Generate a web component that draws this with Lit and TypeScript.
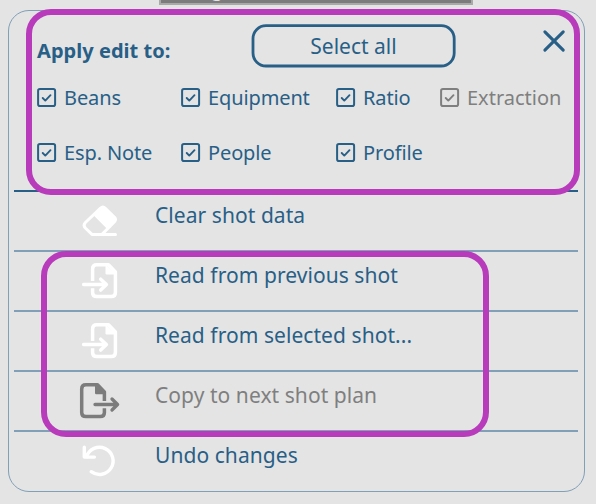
import { LitElement, html, css, svg } from "lit";
import { customElement } from "lit/decorators.js";

const eraser = svg`
  <path d="M7.4 22.5 L22.3 8.3 Q25 6 27.3 8.3 L36.5 17.3 Q38.5 19.5 36.5 21.8 L24 34.4 H14 L7.3 28 Q4.8 25.3 7.4 22.5Z" fill="none" stroke="currentColor" stroke-width="3" stroke-linejoin="round"/>
  <path d="M16 15.7 L22.3 8.3 Q25 6 27.3 8.3 L36.5 17.3 Q38.5 19.5 36.5 21.8 L29 28.7Z" fill="currentColor"/>
  <path d="M15 34.5 H37.5" fill="none" stroke="currentColor" stroke-width="3" stroke-linecap="round"/>`;

const fileIn = svg`
  <path d="M14.6 21 V9 Q14.6 4.8 18.8 4.8 H30.5 L37.4 12 V32.4 Q37.4 36.6 33.2 36.6 H18.8 Q14.6 36.6 14.6 32.4 V28.2" fill="none" stroke="currentColor" stroke-width="3.5" stroke-linejoin="round"/>
  <path d="M27.5 4.5 V13.2 Q27.5 14.4 28.7 14.4 H38.5Z" fill="currentColor"/>
  <path d="M5.6 24.5 H28 M22.7 19.2 L28.4 24.5 L22.7 30.1" fill="none" stroke="currentColor" stroke-width="3.5" stroke-linecap="round" stroke-linejoin="round"/>`;

const fileOut = svg`
  <path d="M26.4 21 V12 L19.5 4.8 H7.9 Q3.7 4.8 3.7 9 V32.4 Q3.7 36.6 7.9 36.6 H22.2 Q26.4 36.6 26.4 32.4 V28.2" fill="none" stroke="currentColor" stroke-width="3.5" stroke-linejoin="round"/>
  <path d="M17 4.5 V13.1 Q17 14.3 18.2 14.3 H27.5Z" fill="currentColor"/>
  <path d="M17 24.5 H39 M34 19 L39.6 24.5 L34 30" fill="none" stroke="currentColor" stroke-width="3.3" stroke-linecap="round" stroke-linejoin="round"/>`;

const undo = svg`
  <path d="M8.6 16.6 A13.6 13.6 0 1 1 13.2 31.7" fill="none" stroke="currentColor" stroke-width="3.4" stroke-linecap="round"/>
  <path d="M6.3 7.3 V17.1 H16.4" fill="none" stroke="currentColor" stroke-width="3.4" stroke-linecap="round" stroke-linejoin="round"/>`;

const fields = [
  { label: "Beans" },
  { label: "Equipment" },
  { label: "Ratio" },
  { label: "Extraction", disabled: true },
  { label: "Esp. Note" },
  { label: "People" },
  { label: "Profile" },
];

const actions = [
  { label: "Clear shot data", icon: eraser },
  { label: "Read from previous shot", icon: fileIn },
  { label: "Read from selected shot...", icon: fileIn },
  { label: "Copy to next shot plan", icon: fileOut, disabled: true },
  { label: "Undo changes", icon: undo },
];

@customElement("app-root")
export class AppRoot extends LitElement {
  static styles = css`
    :host {
      display: block;
      position: relative;
      box-sizing: border-box;
      width: 596px;
      height: 504px;
      padding: 10px 11px 12px 8px;
      overflow: hidden;
      background: #e4e4e4;
      color: #285f87;
      font: 20px/28px "Noto Sans", sans-serif;
    }
    * { box-sizing: border-box; }
    .behind {
      position: absolute;
      left: 159px;
      top: -40px;
      width: 314px;
      height: 45px;
      border: 2px solid #a9a9a9;
      background: #7c7c7c;
      color: #e4e4e4;
      padding: 13px 0 0 50px;
      line-height: 28px;
    }
    .panel {
      position: relative;
      width: 577px;
      height: 482px;
      padding: 0 6px 0 5px;
      border: 1px solid #819fb7;
      border-radius: 21px;
      background: #e4e4e4;
    }
    .head {
      height: 181px;
      padding: 13px 10px 0 23px;
      border-bottom: 2px solid #285f87;
    }
    .top { display: flex; height: 64px; }
    .title { width: 214px; flex: none; margin: 13px 0 0; font-size: 20px; line-height: 28px; font-weight: 700; white-space: nowrap; letter-spacing: 0.04px; }
    .all {
      display: grid;
      width: 205px;
      height: 44px;
      flex: none;
      padding: 0;
      border: 0;
      background: none;
      color: inherit;
      font: 21px/45px "Noto Sans", sans-serif;
    }
    .all > * { grid-area: 1 / 1; }
    .outline { width: 205px; height: 44px; }
    .close { width: 26px; height: 26px; margin: 4px 0 0 85px; flex: none; }
    .fields { display: grid; grid-template-columns: 144px 155px 104px 130px; grid-auto-rows: 55px; }
    .field { display: flex; align-items: flex-start; white-space: nowrap; height: 28px; }
    .field span { margin: -4px 0 0 8px; letter-spacing: -0.12px; }
    .field.off span { letter-spacing: 0; }
    .box { width: 20px; height: 20px; margin-right: -1px; flex: none; }
    .off { color: #7f7f7f; }
    .row { display: flex; height: 60px; border-bottom: 2px solid #819fb7; font-size: 21px; }
    .row:last-child { border-bottom: 0; }
    .icon { width: 44px; height: 44px; margin: 8px 33px 0 64px; color: #fff; flex: none; }
    .off .icon { color: #7c7c7c; }
    .row span { margin-top: 8px; line-height: 30px; letter-spacing: 0.06px; }
    .mark { position: absolute; border: 6px solid #b83bbb; border-radius: 25px; pointer-events: none; }
    .mark.upper { left: 26px; top: 9px; width: 554px; height: 186px; }
    .mark.lower { left: 41px; top: 251px; width: 448px; height: 186px; }
  `;

  render() {
    return html`
      <div class="behind">g</div>
      <section class="panel">
        <header class="head">
          <div class="top">
            <h1 class="title">Apply edit to:</h1>
            <button class="all">
              <svg class="outline" viewBox="0 0 205 44"><rect x="2" y="1.6" width="201.2" height="40.4" rx="13" fill="none" stroke="currentColor" stroke-width="2.8"/></svg>
              <span>Select all</span>
            </button>
            <svg class="close" viewBox="0 0 26 26"><path d="M3.9 3.9 L22.2 22.2 M22.2 3.9 L3.9 22.2" stroke="currentColor" stroke-width="3.1" stroke-linecap="round"/></svg>
          </div>
          <div class="fields">
            ${fields.map((f) => html`
              <label class="field ${f.disabled ? "off" : ""}">
                <svg class="box" viewBox="0 0 20 20" fill="none" stroke="currentColor">
                  <rect x="1.1" y="1.1" width="17" height="17" rx="1.8" stroke-width="2"/>
                  <path d="M5.7 10 L8.3 12.6 L13.5 7.2" stroke-width="1.9" stroke-linecap="round" stroke-linejoin="round"/>
                </svg>
                <span>${f.label}</span>
              </label>`)}
          </div>
        </header>
        ${actions.map((a) => html`
          <div class="row ${a.disabled ? "off" : ""}">
            <svg class="icon" viewBox="0 0 44 44">${a.icon}</svg>
            <span>${a.label}</span>
          </div>`)}
      </section>
      <div class="mark upper"></div>
      <div class="mark lower"></div>
    `;
  }
}
